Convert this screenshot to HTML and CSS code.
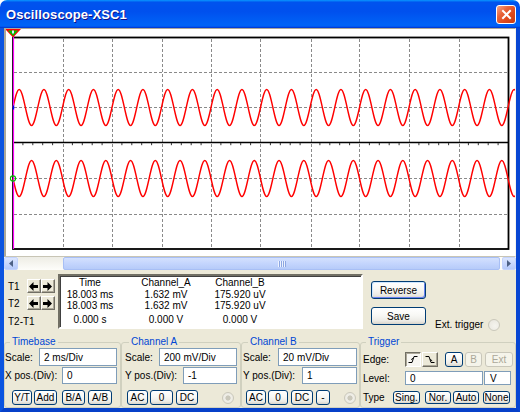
FILE: index.html
```html
<!DOCTYPE html>
<html>
<head>
<meta charset="utf-8">
<title>Oscilloscope-XSC1</title>
<link rel="stylesheet" href="styles.css">
</head>
<body>
<div class="window">
  <div class="titlebar">
    <span class="title">Oscilloscope-XSC1</span>
    <span class="close"><svg width="11" height="11" viewBox="0 0 11 11"><path d="M2 2 L9 9 M9 2 L2 9" stroke="#fff" stroke-width="2" stroke-linecap="square"/></svg></span>
  </div>
  <div class="frame">
    <div class="scope">
      <svg class="screen" width="509" height="227" viewBox="6 29 509 227">
        <g stroke="#8a8a8a" stroke-width="1" stroke-dasharray="3 2" fill="none">
          <path d="M63.5 39V248 M112.5 39V248 M162.5 39V248 M211.5 39V248 M260.5 39V248 M311.5 39V248 M359.5 39V248 M409.5 39V248 M459.5 39V248"/>
          <path d="M14 72.5H507 M14 107.5H507 M14 178.5H507 M14 214.5H507"/>
        </g>
        <path d="M13 142.5H508" stroke="#000" stroke-width="1.5"/>
        <path d="M22.9 143v2.2 M32.8 143v2.2 M42.7 143v2.2 M52.6 143v2.2 M72.4 143v2.2 M82.3 143v2.2 M92.2 143v2.2 M102.1 143v2.2 M121.9 143v2.2 M131.8 143v2.2 M141.7 143v2.2 M151.6 143v2.2 M171.4 143v2.2 M181.3 143v2.2 M191.2 143v2.2 M201.1 143v2.2 M220.9 143v2.2 M230.8 143v2.2 M240.7 143v2.2 M250.6 143v2.2 M270.4 143v2.2 M280.3 143v2.2 M290.2 143v2.2 M300.1 143v2.2 M319.9 143v2.2 M329.8 143v2.2 M339.7 143v2.2 M349.6 143v2.2 M369.4 143v2.2 M379.3 143v2.2 M389.2 143v2.2 M399.1 143v2.2 M418.9 143v2.2 M428.8 143v2.2 M438.7 143v2.2 M448.6 143v2.2 M468.4 143v2.2 M478.3 143v2.2 M488.2 143v2.2 M498.1 143v2.2" stroke="#333" stroke-width="1"/>
        <rect x="13" y="37.5" width="495.5" height="211.5" fill="none" stroke="#000" stroke-width="1.8"/>
        <path id="wave" fill="none" stroke="#ff0000" stroke-width="1.4" d="M13,107.5 c2.018,-9.22 3.948,-18 6.1875,-18 s4.17,8.78 6.1875,18 s3.948,18 6.1875,18 s4.17,-8.78 6.1875,-18 s3.948,-18 6.1875,-18 s4.17,8.78 6.1875,18 s3.948,18 6.1875,18 s4.17,-8.78 6.1875,-18 s3.948,-18 6.1875,-18 s4.17,8.78 6.1875,18 s3.948,18 6.1875,18 s4.17,-8.78 6.1875,-18 s3.948,-18 6.1875,-18 s4.17,8.78 6.1875,18 s3.948,18 6.1875,18 s4.17,-8.78 6.1875,-18 s3.948,-18 6.1875,-18 s4.17,8.78 6.1875,18 s3.948,18 6.1875,18 s4.17,-8.78 6.1875,-18 s3.948,-18 6.1875,-18 s4.17,8.78 6.1875,18 s3.948,18 6.1875,18 s4.17,-8.78 6.1875,-18 s3.948,-18 6.1875,-18 s4.17,8.78 6.1875,18 s3.948,18 6.1875,18 s4.17,-8.78 6.1875,-18 s3.948,-18 6.1875,-18 s4.17,8.78 6.1875,18 s3.948,18 6.1875,18 s4.17,-8.78 6.1875,-18 s3.948,-18 6.1875,-18 s4.17,8.78 6.1875,18 s3.948,18 6.1875,18 s4.17,-8.78 6.1875,-18 s3.948,-18 6.1875,-18 s4.17,8.78 6.1875,18 s3.948,18 6.1875,18 s4.17,-8.78 6.1875,-18 s3.948,-18 6.1875,-18 s4.17,8.78 6.1875,18 s3.948,18 6.1875,18 s4.17,-8.78 6.1875,-18 s3.948,-18 6.1875,-18 s4.17,8.78 6.1875,18 s3.948,18 6.1875,18 s4.17,-8.78 6.1875,-18 s3.948,-18 6.1875,-18 s4.17,8.78 6.1875,18 s3.948,18 6.1875,18 s4.17,-8.78 6.1875,-18 s3.948,-18 6.1875,-18 s4.17,8.78 6.1875,18 s3.948,18 6.1875,18 s4.17,-8.78 6.1875,-18 s3.948,-18 6.1875,-18 s4.17,8.78 6.1875,18 s3.948,18 6.1875,18 s4.17,-8.78 6.1875,-18 s3.948,-18 6.1875,-18 s4.17,8.78 6.1875,18 s3.948,18 6.1875,18 s4.17,-8.78 6.1875,-18 s3.948,-18 6.1875,-18 s4.17,8.78 6.1875,18 s3.948,18 6.1875,18 s4.17,-8.78 6.1875,-18 s3.948,-18 6.1875,-18 s4.17,8.78 6.1875,18 s3.948,18 6.1875,18 s4.17,-8.78 6.1875,-18 s3.948,-18 6.1875,-18 s4.17,8.78 6.1875,18 s3.948,18 6.1875,18 s4.17,-8.78 6.1875,-18 s3.948,-18 6.1875,-18 s4.17,8.78 6.1875,18 s3.948,18 6.1875,18 s4.17,-8.78 6.1875,-18 s3.948,-18 6.1875,-18 s4.17,8.78 6.1875,18 s3.948,18 6.1875,18 s4.17,-8.78 6.1875,-18 s3.948,-18 6.1875,-18 s4.17,8.78 6.1875,18 s3.948,18 6.1875,18 s4.17,-8.78 6.1875,-18"/>
        <use href="#wave" transform="matrix(1 0 0 -1 0 286)"/>
        <path d="M13.5 37V249" stroke="#ff00ff" stroke-width="1.2"/>
        <polygon points="5,29 21,29 13,37.5" fill="#ff0000"/>
        <polygon points="7.8,30.6 18.2,30.6 13,36" fill="#00c000"/>
        <rect x="12" y="30.5" width="2" height="3" fill="#dfe8ff"/>
        <rect x="12.6" y="105.5" width="1.6" height="4" fill="#0000ff"/>
        <circle cx="13" cy="178.5" r="2.6" fill="none" stroke="#00c000" stroke-width="1.1"/>
      </svg>
    </div>
    <div class="hscroll">
      <span class="sbtn"><svg width="6" height="7" viewBox="0 0 6 7"><polygon points="5,0 5,7 1,3.5" fill="#4d6185"/></svg></span>
      <span class="trk1"></span>
      <span class="thumb"><span class="grip"></span></span>
      <span class="trk2"></span>
      <span class="sbtn"><svg width="6" height="7" viewBox="0 0 6 7"><polygon points="1,0 1,7 5,3.5" fill="#4d6185"/></svg></span>
    </div>
    <div class="readout">
      <div class="cursors">
        <div class="crow">
          <span class="clab">T1</span>
          <span class="abtn"><svg width="10" height="9" viewBox="0 0 10 9"><polygon points="0,4.5 4.5,0 4.5,3 9,3 9,6 4.5,6 4.5,9" fill="#000"/></svg></span>
          <span class="abtn"><svg width="10" height="9" viewBox="0 0 10 9"><polygon points="9,4.5 4.5,0 4.5,3 0,3 0,6 4.5,6 4.5,9" fill="#000"/></svg></span>
        </div>
        <div class="crow c2">
          <span class="clab">T2</span>
          <span class="abtn"><svg width="10" height="9" viewBox="0 0 10 9"><polygon points="0,4.5 4.5,0 4.5,3 9,3 9,6 4.5,6 4.5,9" fill="#000"/></svg></span>
          <span class="abtn"><svg width="10" height="9" viewBox="0 0 10 9"><polygon points="9,4.5 4.5,0 4.5,3 0,3 0,6 4.5,6 4.5,9" fill="#000"/></svg></span>
        </div>
        <div class="crow c3"><span class="clab">T2-T1</span></div>
      </div>
      <div class="table">
        <div class="trow th"><span>Time</span><span>Channel_A</span><span>Channel_B</span></div>
        <div class="trow"><span>18.003 ms</span><span>1.632 mV</span><span>175.920 uV</span></div>
        <div class="trow"><span>18.003 ms</span><span>1.632 mV</span><span>175.920 uV</span></div>
        <div class="trow tl"><span>0.000 s</span><span>0.000 V</span><span>0.000 V</span></div>
      </div>
      <div class="actions">
        <span class="xbtn def rev">Reverse</span>
        <div class="arow">
          <span class="xbtn save">Save</span>
          <span class="ext">Ext. trigger</span>
          <span class="radio"></span>
        </div>
      </div>
    </div>
    <div class="controls">
      <fieldset class="grp tb">
        <legend>Timebase</legend>
        <div class="row r1"><span class="lab">Scale:</span><span class="inp i78">2 ms/Div</span></div>
        <div class="row r2"><span class="lab">X pos.(Div):</span><span class="inp i55">0</span></div>
        <div class="row r3">
          <span class="xbtn sel b-yt">Y/T</span>
          <span class="xbtn b-add">Add</span>
          <span class="xbtn b-ba">B/A</span>
          <span class="xbtn b-ab">A/B</span>
        </div>
      </fieldset>
      <fieldset class="grp cha">
        <legend>Channel A</legend>
        <div class="row r1"><span class="lab">Scale:</span><span class="inp i78">200 mV/Div</span></div>
        <div class="row r2"><span class="lab">Y pos.(Div):</span><span class="inp i54">-1</span></div>
        <div class="row r3">
          <span class="xbtn a-ac">AC</span>
          <span class="xbtn a-0">0</span>
          <span class="xbtn a-dc">DC</span>
          <span class="radio dot a-rad"></span>
        </div>
      </fieldset>
      <fieldset class="grp chb">
        <legend>Channel B</legend>
        <div class="row r1"><span class="lab">Scale:</span><span class="inp i79">20 mV/Div</span></div>
        <div class="row r2"><span class="lab">Y pos.(Div):</span><span class="inp i55">1</span></div>
        <div class="row r3">
          <span class="xbtn c-ac">AC</span>
          <span class="xbtn c-0">0</span>
          <span class="xbtn c-dc">DC</span>
          <span class="xbtn c-m">-</span>
          <span class="radio dot c-rad"></span>
        </div>
      </fieldset>
      <fieldset class="grp trg">
        <legend>Trigger</legend>
        <div class="row t1">
          <span class="lab tlab">Edge:</span>
          <span class="ebtn down"><svg width="10" height="9" viewBox="0 0 10 9"><path d="M0.5 7.5H4L6 1.5H9.5" fill="none" stroke="#000" stroke-width="1"/><path d="M3.2 4.6L5.2 3.2" stroke="#000" stroke-width="1"/></svg></span>
          <span class="ebtn up"><svg width="10" height="9" viewBox="0 0 10 9"><path d="M0.5 1.5H4L6 7.5H9.5" fill="none" stroke="#000" stroke-width="1"/><path d="M5.2 4.4L7.2 5.8" stroke="#000" stroke-width="1"/></svg></span>
          <span class="xbtn sel t-a">A</span>
          <span class="xbtn dis t-b">B</span>
          <span class="xbtn dis t-ext">Ext</span>
        </div>
        <div class="row t2">
          <span class="lab tlab">Level:</span>
          <span class="inp i78b">0</span>
          <span class="inp unit">V</span>
        </div>
        <div class="row t3">
          <span class="lab ty">Type</span>
          <span class="xbtn y-s">Sing.</span>
          <span class="xbtn y-n">Nor.</span>
          <span class="xbtn y-a">Auto</span>
          <span class="xbtn y-o">None</span>
        </div>
      </fieldset>
    </div>
  </div>
</div>
</body>
</html>
```
FILE: styles.css
```css
* { box-sizing: border-box; }
html, body { margin: 0; padding: 0; }
body {
  width: 520px; height: 412px; overflow: hidden;
  font-family: "Liberation Sans", Arial, sans-serif;
  font-size: 10px; color: #000; background: #fff;
}
.window { width: 520px; height: 412px; display: flex; flex-direction: column; }

/* title bar */
.titlebar {
  height: 28px; flex: none; display: flex; align-items: center;
  padding: 0 4px 0 6px;
  border-radius: 7px 7px 0 0;
  background: linear-gradient(180deg, #0997ff 0, #0053ee 8%, #0050ee 40%, #0062f6 86%, #0062f6 92%, #0056f0 95%, #003dd7 97%, #003dd7 100%);
}
.title {
  flex: 1; color: #fff; font-weight: bold;
  font-family: "Liberation Sans Narrow", "Liberation Sans", Arial, sans-serif;
  font-size: 13px; letter-spacing: 0.1px;
  text-shadow: 1px 1px #0f1089;
}
.close {
  width: 20px; height: 19px; flex: none;
  border: 1px solid #fff; border-radius: 3px;
  background: linear-gradient(135deg, #f6a587 0, #e7643a 35%, #e0491c 65%, #c93c12 100%);
  display: flex; align-items: center; justify-content: center;
}

/* window frame & client */
.frame {
  flex: 1; display: flex; flex-direction: column;
  border: 4px solid #0a55e4; border-top: 0;
  border-left-color: #0b54e0; border-right-color: #0746d3; border-bottom-color: #0640c9;
  background: #ece9d8;
}

/* scope screen */
.scope {
  height: 229px; flex: none; background: #fff;
  border-style: solid; border-width: 1px 1px 1px 2px;
  border-color: #aca899 #f5f4ee #c8c5b5 #aca899;
}
.screen { display: block; }

/* scrollbar */
.hscroll { height: 13px; flex: none; display: flex; background: #f7f6f1; }
.sbtn {
  width: 14px; height: 13px; flex: none;
  border: 1px solid #c3d3fd; border-radius: 2px;
  background: linear-gradient(180deg, #dce6fe 0, #c8d7fd 50%, #b6cafa 100%);
  display: flex; align-items: center; justify-content: center;
}
.trk1 { width: 45px; flex: none; background: linear-gradient(180deg, #eeede5, #fdfdfa); }
.thumb {
  width: 437px; flex: none;
  border: 1px solid #a8bff5; border-radius: 2px;
  background: linear-gradient(180deg, #d4e1fe 0, #c4d5fd 50%, #b6cbf9 100%);
  display: flex; align-items: center; justify-content: center;
}
.grip {
  width: 8px; height: 6px;
  background: repeating-linear-gradient(90deg, #eef3fe 0 1px, #8ca6e2 1px 2px);
}
.trk2 { width: 2px; flex: none; background: #fdfdfa; }

/* readout */
.readout { height: 66px; flex: none; display: flex; }
.cursors { width: 54px; flex: none; padding: 9px 0 0 4px; }
.crow { height: 14px; display: flex; align-items: center; }
.crow.c2 { margin-top: 3px; }
.crow.c3 { margin-top: 4px; }
.clab { width: 19px; flex: none; }
.c3 .clab { width: auto; }
.abtn {
  width: 14px; height: 14px; flex: none;
  background: #ece9d8;
  border: 1px solid; border-color: #fff #716f64 #716f64 #fff;
  box-shadow: inset -1px -1px #aca899;
  display: flex; align-items: center; justify-content: center;
}
.table {
  width: 305px; height: 55px; flex: none; margin-top: 4px;
  background: #fff;
  border: 2px solid; border-color: #716f64 #fff #fff #716f64;
  box-shadow: inset 1px 1px #404040;
  padding-top: 1px;
}
.trow { display: grid; grid-template-columns: 60px 92px 56px; height: 11px; line-height: 11px; }
.trow span { text-align: center; white-space: nowrap; }
.trow.th { height: 12px; line-height: 12px; }
.trow.tl { margin-top: 3px; height: 12px; line-height: 12px; }
.actions { flex: 1; padding: 11px 0 0 8px; display: flex; flex-direction: column; }
.arow { display: flex; height: 25px; margin-top: 8px; }
.ext { align-self: flex-end; height: 14px; line-height: 14px; margin-left: 9px; }
.arow .radio { align-self: flex-end; margin: 0 0 1px 5px; }

/* XP buttons */
.xbtn {
  flex: none; display: flex; align-items: center; justify-content: center;
  border: 1px solid #003c74; border-radius: 3px;
  background: linear-gradient(180deg, #ffffff 0, #f8f8f5 45%, #ecebe6 80%, #d8d4cb 100%);
  white-space: nowrap; font-size: 10px; color: #000;
}
.xbtn.rev, .xbtn.save { width: 55px; height: 18px; }
.xbtn.def { box-shadow: inset 1px 1px #cee7ff, inset -1px -1px #6982ee; }
.xbtn.dis { border-color: #c9c7ba; color: #aca899; background: #f5f4ea; }
.radio {
  width: 12px; height: 12px; flex: none; border-radius: 50%;
  border: 1px solid #cac8bb;
  background: radial-gradient(circle at 60% 60%, #f5f4ee 0, #e7e5dc 100%);
}
.radio.dot { background: radial-gradient(circle, #cac8bb 0 2.2px, #f0efe8 3px, #e7e5dc 100%); }

/* group boxes */
.controls { height: 72px; flex: none; display: flex; }
.grp {
  margin: 0; min-width: 0; height: 72px; flex: none;
  border: 1px solid #d0d0bf; border-radius: 3px;
}
.grp legend { padding: 0 2px; color: #0046d5; line-height: 12px; font-size: 10px; }
.tb { width: 117px; padding: 0 3px 0 0; }
.tb legend { margin-left: 5px; }
.cha { width: 120px; padding: 0 3px 0 3px; }
.cha legend { margin-left: 4px; }
.chb { width: 119px; padding: 0 2px 0 1px; }
.chb legend { margin-left: 5px; }
.trg { width: 156px; padding: 0 4px 0 2px; }
.trg legend { margin-left: 3px; }

.row { display: flex; align-items: center; }
.r1 { height: 18px; }
.r2 { height: 17px; margin-top: 1px; }
.r3 { height: 15px; margin-top: 6px; }
.r3 .xbtn { height: 15px; }
.lab { flex: none; white-space: nowrap; }
.inp {
  flex: none; margin-left: auto; height: 100%;
  border: 1px solid #7f9db9; background: #fff;
  padding-left: 4px; display: flex; align-items: center; white-space: nowrap;
}
.i78 { width: 78px; }
.i79 { width: 79px; }
.i55 { width: 55px; }
.i54 { width: 54px; }

.b-yt { width: 20px; margin-left: 7px; }
.b-add { width: 23px; margin-left: 2px; }
.b-ba { width: 23px; margin-left: 5px; }
.b-ab { width: 24px; margin-left: 3px; }

.a-ac { width: 21px; margin-left: 2px; }
.a-0 { width: 23px; margin-left: 2px; }
.a-dc { width: 22px; margin-left: 3px; }
.a-rad { margin-left: 24px; }

.c-ac { width: 20px; margin-left: 3px; }
.c-0 { width: 20px; margin-left: 2px; }
.c-dc { width: 22px; margin-left: 3px; }
.c-m { width: 14px; margin-left: 3px; }
.c-rad { margin-left: 14px; }

.t1 { height: 15px; margin-top: 4px; }
.t2 { height: 14px; margin-top: 4px; }
.t3 { height: 13px; margin-top: 6px; }
.tlab { width: 42px; }
.ty { width: 30px; }
.t1 .xbtn, .t3 .xbtn { height: 100%; }
.ebtn {
  width: 16px; height: 15px; flex: none;
  display: flex; align-items: center; justify-content: center;
  border: 1px solid; background: #ece9d8;
}
.ebtn.down { border-color: #716f64 #fff #fff #716f64; background: #f7f6f1; box-shadow: inset 1px 1px #aca899; }
.ebtn.up { margin-left: 1px; border-color: #fff #716f64 #716f64 #fff; box-shadow: inset -1px -1px #aca899; }
.t-a { width: 18px; margin-left: 7px; }
.t-b { width: 17px; margin-left: 2px; }
.t-ext { width: 28px; margin-left: 3px; }
.i78b { width: 78px; margin-left: 0; }
.unit { width: 27px; margin-left: 1px; padding-left: 5px; }
.y-s { width: 27px; }
.y-n { width: 26px; margin-left: 5px; }
.y-a { width: 26px; margin-left: 2px; }
.y-o { width: 27px; margin-left: 4px; }
```
